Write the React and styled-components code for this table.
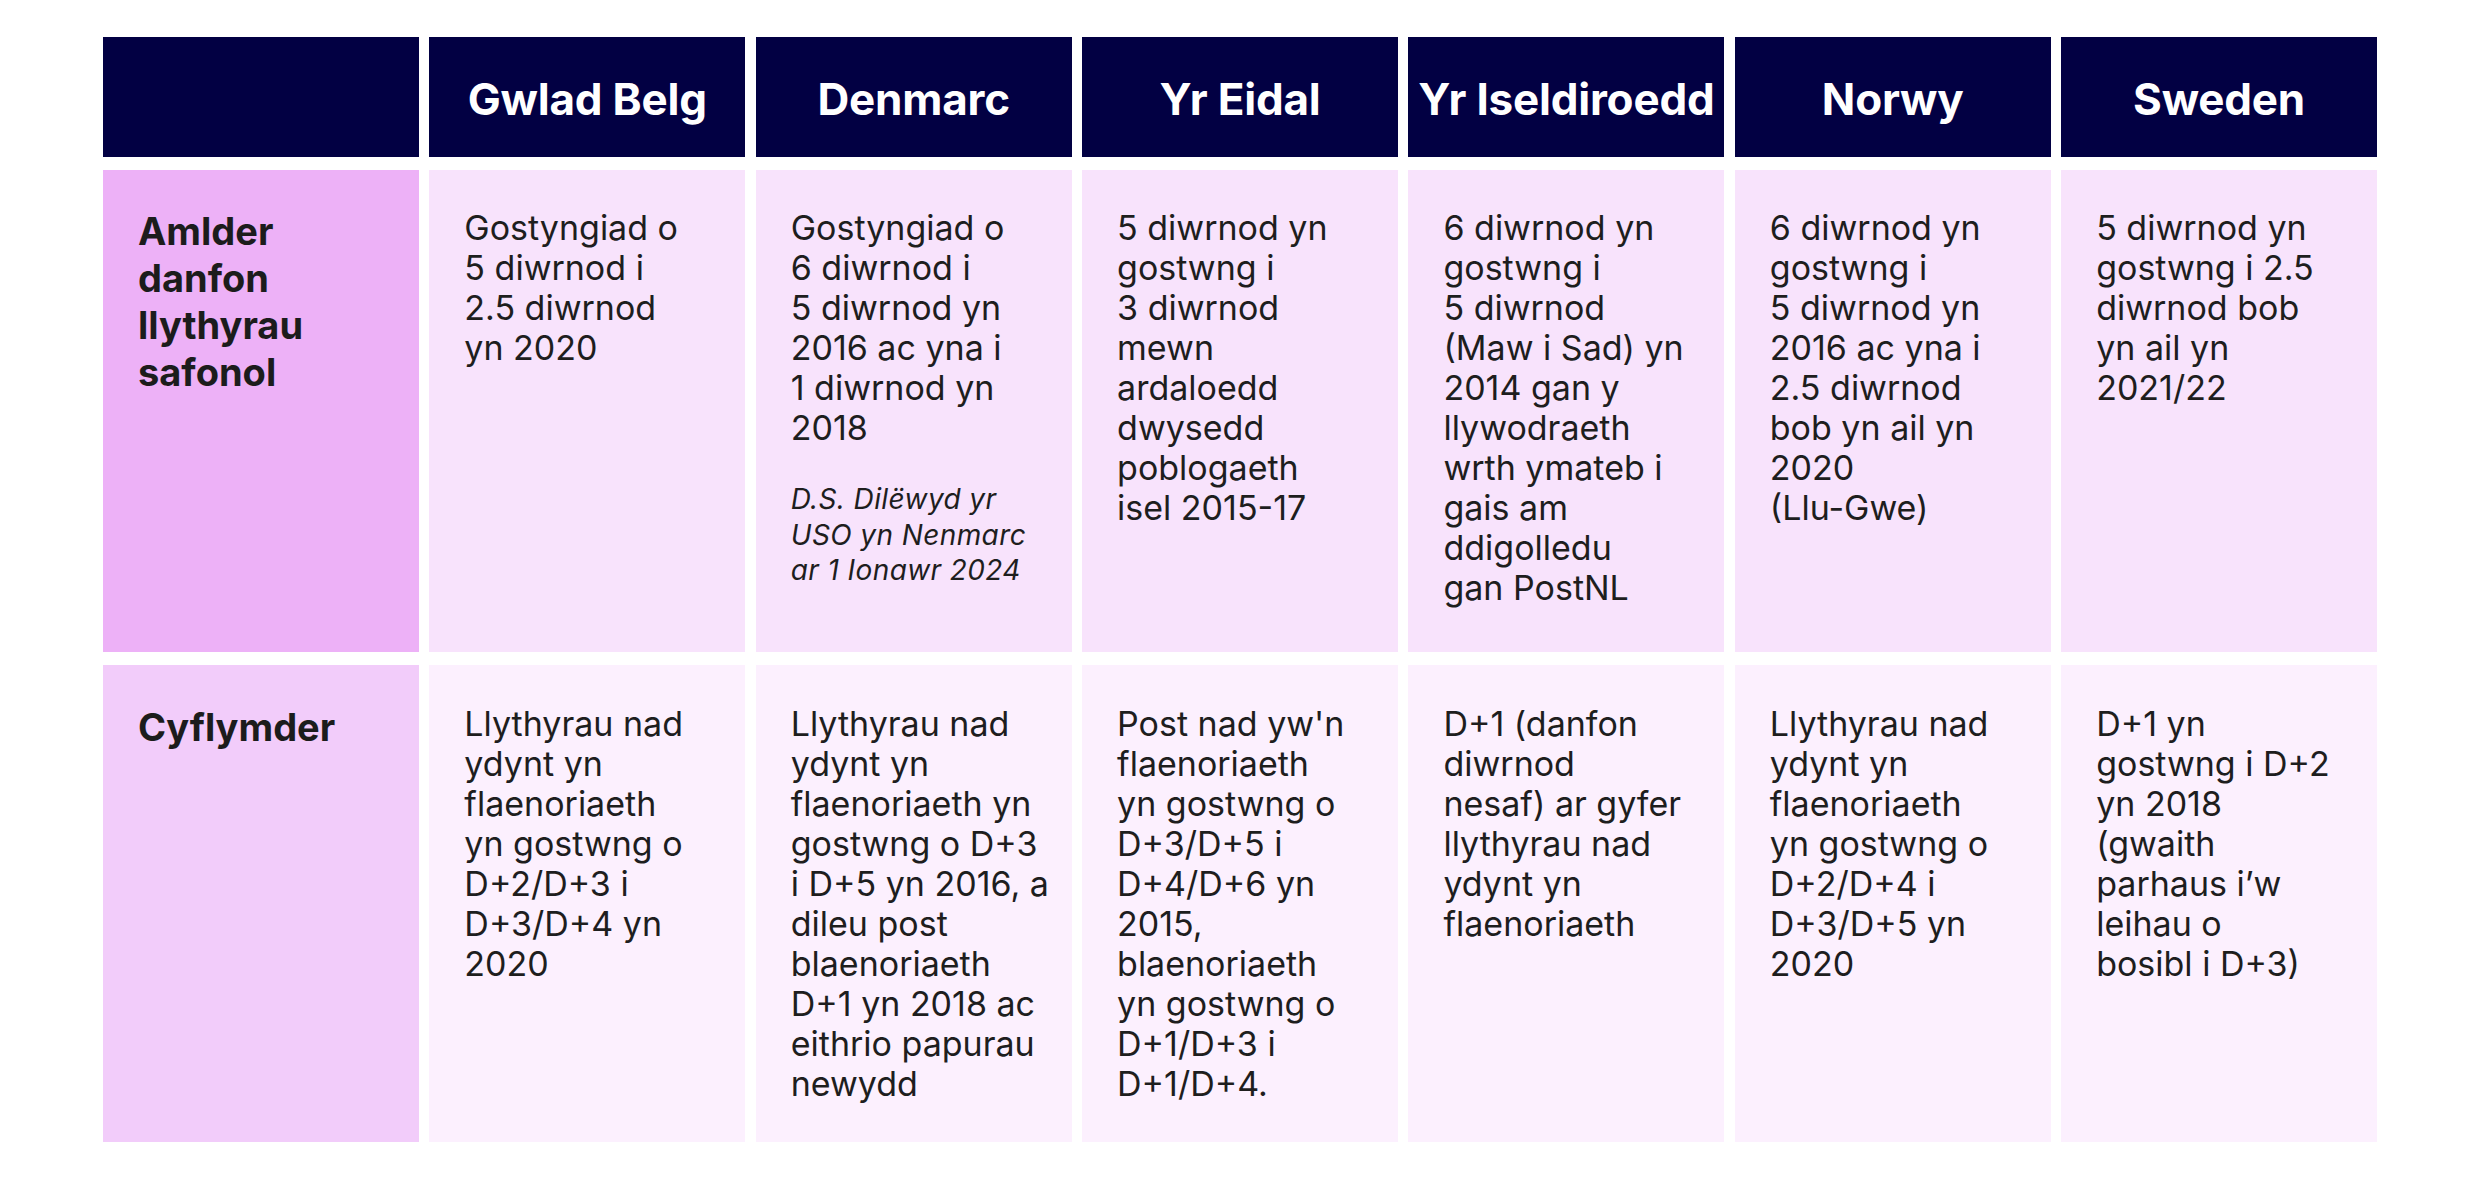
import React from "react";
import styled, { createGlobalStyle } from "styled-components";

const GlobalStyle = createGlobalStyle`
  html, body {
    margin: 0;
    padding: 0;
    background: #ffffff;
  }
  body {
    font-family: Inter, "Noto Sans", "Liberation Sans", sans-serif;
    color: #1e1e1e;
  }
`;

const Page = styled.main`
  padding: 37px 0 0 103px;
`;

const Table = styled.div`
  display: grid;
  width: 2274px;
  grid-template-columns: repeat(7, 1fr);
  grid-template-rows: 120px auto auto;
  column-gap: 10.5px;
  row-gap: 13px;
`;

const HeadCell = styled.div`
  background: #020043;
  color: #ffffff;
  display: flex;
  align-items: center;
  justify-content: center;
  font-weight: 700;
  font-size: 44px;
  letter-spacing: -0.2px;
  white-space: nowrap;
  padding-top: 4px;
`;

const tones = {
  first: { label: "#edb1f7", data: "#f8e3fc", pad: "38px 12px 44px 35px" },
  second: { label: "#f2ccfa", data: "#fcf0fe", pad: "39px 12px 38px 35px" },
};

const LabelCell = styled.div`
  background: ${(p) => tones[p.$tone].label};
  padding: ${(p) => tones[p.$tone].pad};
  font-weight: 700;
  font-size: 38px;
  line-height: 47px;
  color: #1c1c1c;
`;

const DataCell = styled.div`
  background: ${(p) => tones[p.$tone].data};
  padding: ${(p) => tones[p.$tone].pad};
  font-size: 34px;
  line-height: 40px;
  font-weight: 400;
  color: #1e1e1e;
`;

const Line = styled.span`
  display: block;
  white-space: nowrap;
`;

const Note = styled.div`
  margin-top: 34px;
  font-style: italic;
  font-size: 28px;
  letter-spacing: 0.4px;
  line-height: 35.5px;
`;

const headers = ["", "Gwlad Belg", "Denmarc", "Yr Eidal", "Yr Iseldiroedd", "Norwy", "Sweden"];

const rows = [
  {
    tone: "first",
    label: ["Amlder", "danfon", "llythyrau", "safonol"],
    cells: [
      { lines: ["Gostyngiad o", "5 diwrnod i", "2.5 diwrnod", "yn 2020"] },
      {
        lines: ["Gostyngiad o", "6 diwrnod i", "5 diwrnod yn", "2016 ac yna i", "1 diwrnod yn", "2018"],
        note: ["D.S. Dilëwyd yr", "USO yn Nenmarc", "ar 1 Ionawr 2024"],
      },
      {
        lines: ["5 diwrnod yn", "gostwng i", "3 diwrnod", "mewn", "ardaloedd", "dwysedd", "poblogaeth", "isel 2015-17"],
      },
      {
        lines: [
          "6 diwrnod yn",
          "gostwng i",
          "5 diwrnod",
          "(Maw i Sad) yn",
          "2014 gan y",
          "llywodraeth",
          "wrth ymateb i",
          "gais am",
          "ddigolledu",
          "gan PostNL",
        ],
      },
      {
        lines: [
          "6 diwrnod yn",
          "gostwng i",
          "5 diwrnod yn",
          "2016 ac yna i",
          "2.5 diwrnod",
          "bob yn ail yn",
          "2020",
          "(Llu-Gwe)",
        ],
      },
      { lines: ["5 diwrnod yn", "gostwng i 2.5", "diwrnod bob", "yn ail yn", "2021/22"] },
    ],
  },
  {
    tone: "second",
    label: ["Cyflymder"],
    cells: [
      {
        lines: ["Llythyrau nad", "ydynt yn", "flaenoriaeth", "yn gostwng o", "D+2/D+3 i", "D+3/D+4 yn", "2020"],
      },
      {
        lines: [
          "Llythyrau nad",
          "ydynt yn",
          "flaenoriaeth yn",
          "gostwng o D+3",
          "i D+5 yn 2016, a",
          "dileu post",
          "blaenoriaeth",
          "D+1 yn 2018 ac",
          "eithrio papurau",
          "newydd",
        ],
      },
      {
        lines: [
          "Post nad yw'n",
          "flaenoriaeth",
          "yn gostwng o",
          "D+3/D+5 i",
          "D+4/D+6 yn",
          "2015,",
          "blaenoriaeth",
          "yn gostwng o",
          "D+1/D+3 i",
          "D+1/D+4.",
        ],
      },
      {
        lines: ["D+1 (danfon", "diwrnod", "nesaf) ar gyfer", "llythyrau nad", "ydynt yn", "flaenoriaeth"],
      },
      {
        lines: ["Llythyrau nad", "ydynt yn", "flaenoriaeth", "yn gostwng o", "D+2/D+4 i", "D+3/D+5 yn", "2020"],
      },
      {
        lines: ["D+1 yn", "gostwng i D+2", "yn 2018", "(gwaith", "parhaus i’w", "leihau o", "bosibl i D+3)"],
      },
    ],
  },
];

export default function App() {
  return (
    <>
      <GlobalStyle />
      <Page>
        <Table>
          {headers.map((h, i) => (
            <HeadCell key={"h" + i}>{h}</HeadCell>
          ))}
          {rows.map((row, r) => (
            <React.Fragment key={"r" + r}>
              <LabelCell $tone={row.tone}>
                {row.label.map((l, i) => (
                  <Line key={i}>{l}</Line>
                ))}
              </LabelCell>
              {row.cells.map((cell, c) => (
                <DataCell key={c} $tone={row.tone}>
                  {cell.lines.map((l, i) => (
                    <Line key={i}>{l}</Line>
                  ))}
                  {cell.note && (
                    <Note>
                      {cell.note.map((l, i) => (
                        <Line key={i}>{l}</Line>
                      ))}
                    </Note>
                  )}
                </DataCell>
              ))}
            </React.Fragment>
          ))}
        </Table>
      </Page>
    </>
  );
}
